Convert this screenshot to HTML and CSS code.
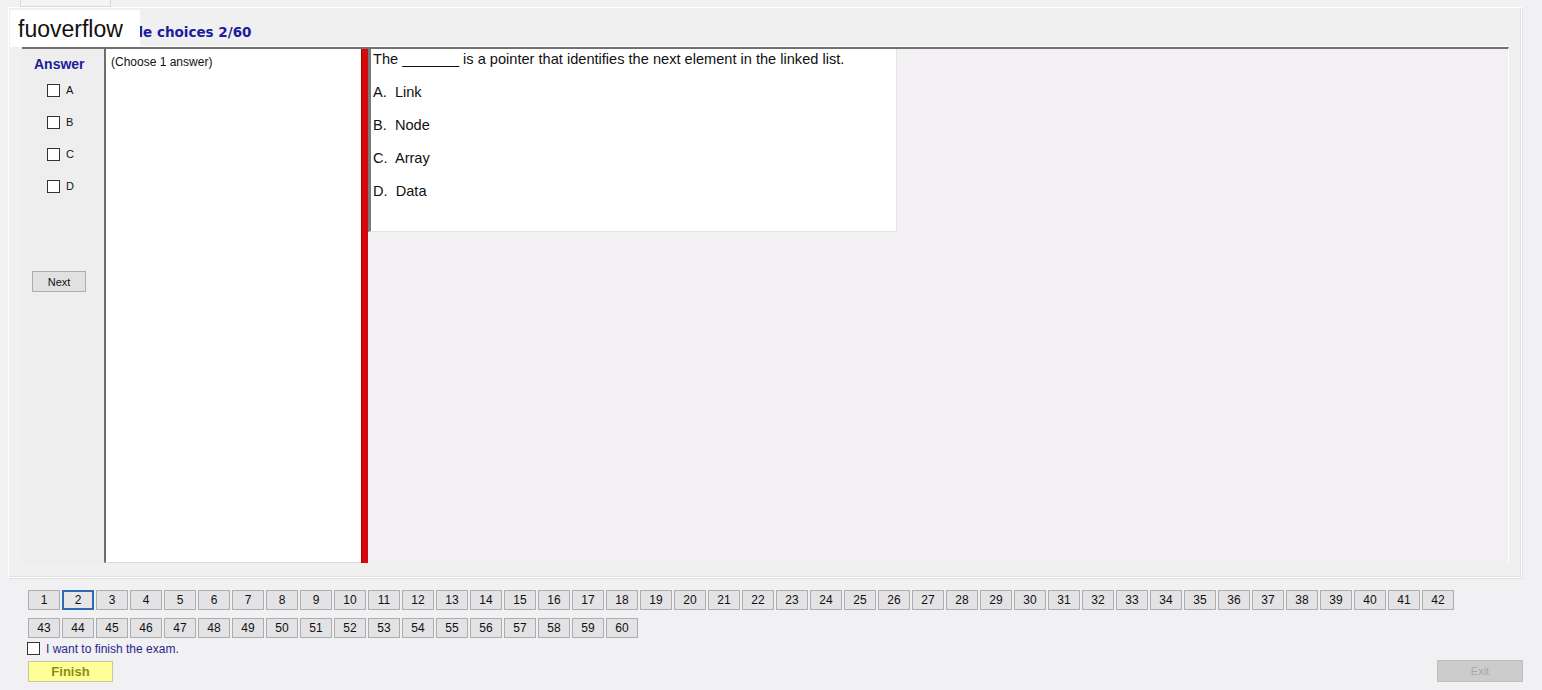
FILE: index.html
```html
<!DOCTYPE html>
<html>
<head>
<meta charset="utf-8">
<link rel="stylesheet" href="styles.css">
</head>
<body>
<div class="page">
  <div class="tabstrip"><div class="tab"></div></div>
  <div class="groupbox">
    <div class="title">Multiple choices 2/60</div>
    <div class="content">
      <div class="answers">
        <div class="answer-label">Answer</div>
        <div class="opt"><span class="cb"></span><span>A</span></div>
        <div class="opt"><span class="cb"></span><span>B</span></div>
        <div class="opt"><span class="cb"></span><span>C</span></div>
        <div class="opt"><span class="cb"></span><span>D</span></div>
        <button class="next">Next</button>
      </div>
      <div class="choose">(Choose 1 answer)</div>
      <div class="redbar"></div>
      <div class="right">
        <div class="question">
          <p>The _______ is a pointer that identifies the next element in the linked list.</p>
          <p>A.&nbsp; Link</p>
          <p>B.&nbsp; Node</p>
          <p>C.&nbsp; Array</p>
          <p>D.&nbsp; Data</p>
        </div>
      </div>
    </div>
  </div>
  <div class="bottom">
    <div class="numbers" id="numbers"></div>
    <label class="finish-check"><span class="cb"></span><span>I want to finish the exam.</span></label>
    <div class="actions">
      <button class="finish">Finish</button>
      <button class="exit">Exit</button>
    </div>
  </div>
  <div class="watermark">fuoverflow</div>
</div>
<script src="script.js"></script>
</body>
</html>
```
FILE: script.js
```js
var box = document.getElementById('numbers');
for (var i = 1; i <= 60; i++) {
  var b = document.createElement('button');
  b.className = 'num' + (i === 2 ? ' current' : '');
  b.textContent = i;
  box.appendChild(b);
}
```
FILE: styles.css
```css
* { box-sizing: border-box; }
html, body { margin: 0; padding: 0; }
body {
  background: #f1f0f2;
  font-family: "Liberation Sans", Arial, sans-serif;
  width: 1542px;
  height: 690px;
  overflow: hidden;
}
.page { position: relative; width: 1542px; height: 690px; }

.tabstrip { height: 7px; }
.tab {
  margin-left: 20px;
  width: 91px;
  height: 7px;
  border: 1px solid #d9d9d9;
  border-top: none;
  background: #f4f4f4;
}

.groupbox {
  margin-left: 8px;
  width: 1514px;
  height: 571px;
  border: 1px solid #ffffff;
  box-shadow: inset -1px -1px 0 #e0e0e0, 1px 1px 0 #e0e0e0;
  background: #f0f0f0;
  padding: 16px 0 0 13px;
}
.title {
  font-family: "DejaVu Sans", Verdana, sans-serif;
  font-size: 13.5px;
  font-weight: bold;
  color: #1c1c9c;
  padding-left: 68px;
  height: 23px;
}
.content {
  width: 1487px;
  height: 516px;
  border-top: 2px solid #707070;
  display: flex;
  box-shadow: 0 -1px 0 #fff;
  border-right: 1px solid #ffffff;
}
.answers {
  width: 82px;
  background: #eeeeee;
  display: flex;
  flex-direction: column;
  align-items: flex-start;
}
.answer-label {
  font-size: 14px;
  font-weight: bold;
  color: #1c1c9c;
  margin: 7px 0 0 12px;
  height: 20px;
}
.opt {
  display: flex;
  align-items: center;
  gap: 6px;
  margin-left: 25px;
  height: 32px;
  font-size: 11px;
  color: #111;
  padding-bottom: 4px;
}
.cb {
  display: inline-block;
  width: 13px;
  height: 13px;
  border: 1px solid #333;
  background: #fff;
}
.next {
  margin: 67px 0 0 10px;
  width: 54px;
  height: 21px;
  font-family: "Liberation Sans", Arial, sans-serif;
  font-size: 11px;
  color: #111;
  background: #e1e1e1;
  border: 1px solid #adadad;
  padding: 0;
}
.choose {
  width: 257px;
  background: #ffffff;
  border-left: 2px solid #6d6d6d;
  border-bottom: 1px solid #dcdcdc;
  font-size: 12px;
  color: #111;
  padding: 6px 0 0 5px;
}
.redbar {
  width: 7px;
  background: #d40a0a;
  border-left: 1px solid #b00000;
}
.right {
  flex: 1;
  background: #f2f0f2;
}
.question {
  width: 529px;
  height: 183px;
  background: #ffffff;
  border-left: 3px solid #7a7a7a;
  border-right: 1px solid #e4e4e4;
  border-bottom: 1px solid #e4e4e4;
  padding: 2px 0 0 2px;
  font-size: 14.6px;
  color: #111;
}
.question p { margin: 0 0 17px 0; line-height: 16px; }

.bottom { padding: 12px 0 0 28px; }
.numbers {
  width: 1428px;
  display: flex;
  flex-wrap: wrap;
  gap: 8px 2px;
}
.num {
  width: 32px;
  height: 20px;
  padding: 0;
  font-family: "Liberation Sans", Arial, sans-serif;
  font-size: 12px;
  color: #111;
  background: #e3e2e4;
  border: 1px solid #adadad;
}
.num.current {
  border: 2px solid #2a6db5;
  background: #e6e6e8;
}
.finish-check {
  display: flex;
  align-items: center;
  gap: 6px;
  margin: 2px 0 0 -1px;
  height: 17px;
  font-size: 12px;
  color: #2a1f8f;
}
.actions {
  display: flex;
  justify-content: space-between;
  align-items: center;
  width: 1495px;
  margin-top: 3px;
}
.finish {
  width: 85px;
  height: 21px;
  padding: 0;
  font-family: "Liberation Sans", Arial, sans-serif;
  font-size: 13px;
  font-weight: bold;
  color: #8c8c10;
  background: #ffff99;
  border: 1px solid #c8c8a0;
}
.exit {
  width: 86px;
  height: 22px;
  padding: 0;
  font-family: "Liberation Sans", Arial, sans-serif;
  font-size: 11px;
  color: #a8a8a8;
  background: #cccccc;
  border: 1px solid #bdbdbd;
}

.watermark {
  position: absolute;
  left: 10px;
  top: 10px;
  width: 130px;
  height: 37px;
  background: #ffffff;
  font-size: 23px;
  color: #111;
  padding: 6px 0 0 8px;
  line-height: 26px;
}
```
